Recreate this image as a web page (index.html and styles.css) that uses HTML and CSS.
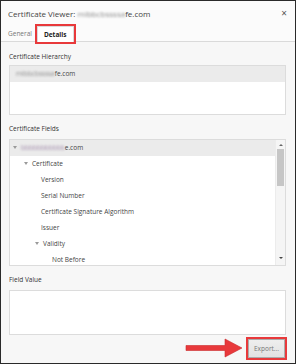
FILE: index.html
```html
<!DOCTYPE html>
<html lang="en">
<head>
  <meta charset="UTF-8">
  <title>Certificate Viewer</title>
  <meta name="viewport" content="width=device-width, initial-scale=1.0">
  <link rel="stylesheet" href="styles.css">
</head>
<body>

  <div class="window">
    <div class="titlebar">
      <span class="title">Certificate Viewer: <span class="masked">mlbbcbssssa</span>fe.com</span>
      <span class="close">×</span>
    </div>

    <div class="tabs">
      <span class="tab">General</span>
      <span class="tab active marked">Details</span>
    </div>

    <div class="content">
      <div class="label">Certificate Hierarchy</div>
      <div class="box hierarchy">
        <div class="row selected"><span class="masked">mlbbcbssssa</span>fe.com</div>
      </div>

      <div class="label">Certificate Fields</div>
      <div class="box fields">
        <div class="tree">
          <div class="row selected lvl0"><span class="caret"></span><span class="masked pink">bbbbbbbbbbb</span>e.com</div>
          <div class="row lvl1"><span class="caret"></span>Certificate</div>
          <div class="row lvl2">Version</div>
          <div class="row lvl2">Serial Number</div>
          <div class="row lvl2">Certificate Signature Algorithm</div>
          <div class="row lvl2">Issuer</div>
          <div class="row lvl2 parent"><span class="caret"></span>Validity</div>
          <div class="row lvl3">Not Before</div>
        </div>
        <div class="scrollbar">
          <span class="arrow up"></span>
          <span class="thumb"></span>
          <span class="arrow down"></span>
        </div>
      </div>

      <div class="label">Field Value</div>
      <div class="box value"></div>

      <div class="footer">
        <svg class="pointer" width="60" height="22" viewBox="0 0 60 22">
          <path d="M2 8.5 H41 V2 L58 11 L41 20 V13.5 H2 Z" fill="#e8393b" stroke="#c92a2c" stroke-width="0.6"/>
        </svg>
        <button class="export marked">Export...</button>
      </div>
    </div>
  </div>

</body>
</html>
```

FILE: styles.css
```css
html, body {
  margin: 0;
  padding: 0;
}

body {
  width: 296px;
  height: 364px;
  font-family: 'Open Sans', sans-serif;
  color: #333;
}

.window {
  box-sizing: border-box;
  width: 296px;
  height: 364px;
  border: 1px solid #2a2a2a;
  background: #f7f7f7;
  display: flex;
  flex-direction: column;
}

.titlebar {
  display: flex;
  justify-content: space-between;
  padding: 7px 8px 0 7px;
  height: 15px;
  background: #fbfbfb;
}

.title {
  font-size: 8px;
  line-height: 12px;
  color: #444;
}

.close {
  font-size: 10px;
  line-height: 10px;
  color: #555;
}

.masked {
  color: #8d8d8d;
  filter: blur(1px);
}

.masked.pink {
  color: #a58fae;
}

.tabs {
  display: flex;
  align-items: flex-end;
  height: 18px;
  padding-left: 2px;
  border-bottom: 1px solid #dadada;
  background: #fbfbfb;
}

.tab {
  font-size: 6.5px;
  line-height: 14px;
  padding: 0 5px;
  color: #777;
}

.tab.active {
  margin-bottom: -1px;
  padding: 0 6px;
  background: #fff;
  border: 1px solid #dadada;
  border-bottom: none;
  font-weight: bold;
  color: #222;
  line-height: 15px;
}

.marked {
  outline: 2px solid #e8393b;
}

.content {
  flex: 1;
  display: flex;
  flex-direction: column;
  padding: 0 9px 0 8px;
}

.label {
  font-size: 6.5px;
  line-height: 10px;
  margin: 9px 0 5px;
  color: #333;
}

.content .label:first-child {
  margin-top: 10px;
  margin-bottom: 3px;
}

.box {
  box-sizing: border-box;
  background: #fff;
  border: 1px solid #dcdcdc;
}

.hierarchy {
  height: 50px;
}

.row {
  height: 16px;
  line-height: 16px;
  font-size: 6.5px;
  color: #444;
  white-space: nowrap;
  padding-left: 6px;
}

.row.selected {
  background: #ebebeb;
}

.fields {
  height: 127px;
  display: flex;
  overflow: hidden;
}

.tree {
  flex: 1;
}

.caret {
  display: inline-block;
  width: 0;
  height: 0;
  border-left: 2px solid transparent;
  border-right: 2px solid transparent;
  border-top: 3px solid #9a9a9a;
  margin-right: 4px;
  vertical-align: 1px;
}

.lvl0 { padding-left: 3px; }
.lvl1 { padding-left: 14px; }
.lvl2 { padding-left: 31px; }
.lvl2.parent { padding-left: 25px; }
.lvl3 { padding-left: 42px; }

.scrollbar {
  width: 9px;
  background: #f5f5f5;
  border-left: 1px solid #ececec;
  display: flex;
  flex-direction: column;
  align-items: center;
}

.arrow {
  width: 0;
  height: 0;
  border-left: 2px solid transparent;
  border-right: 2px solid transparent;
}

.arrow.up {
  border-bottom: 2px solid #666;
  margin: 4px 0 3px;
}

.arrow.down {
  border-top: 2px solid #444;
  margin-top: auto;
  margin-bottom: 6px;
}

.thumb {
  width: 7px;
  height: 37px;
  background: #c6c6c6;
}

.value {
  height: 45px;
}

.footer {
  display: flex;
  justify-content: flex-end;
  align-items: center;
  gap: 4px;
  margin-top: 2px;
  padding-right: 1px;
}

.pointer {
  display: block;
}

.export {
  box-sizing: border-box;
  width: 37px;
  height: 19px;
  padding: 0;
  font-family: 'Open Sans', sans-serif;
  font-size: 6.5px;
  color: #777;
  background: linear-gradient(#eeeeee, #e2e2e2);
  border: 1px solid #ababab;
  border-radius: 0;
}
```
